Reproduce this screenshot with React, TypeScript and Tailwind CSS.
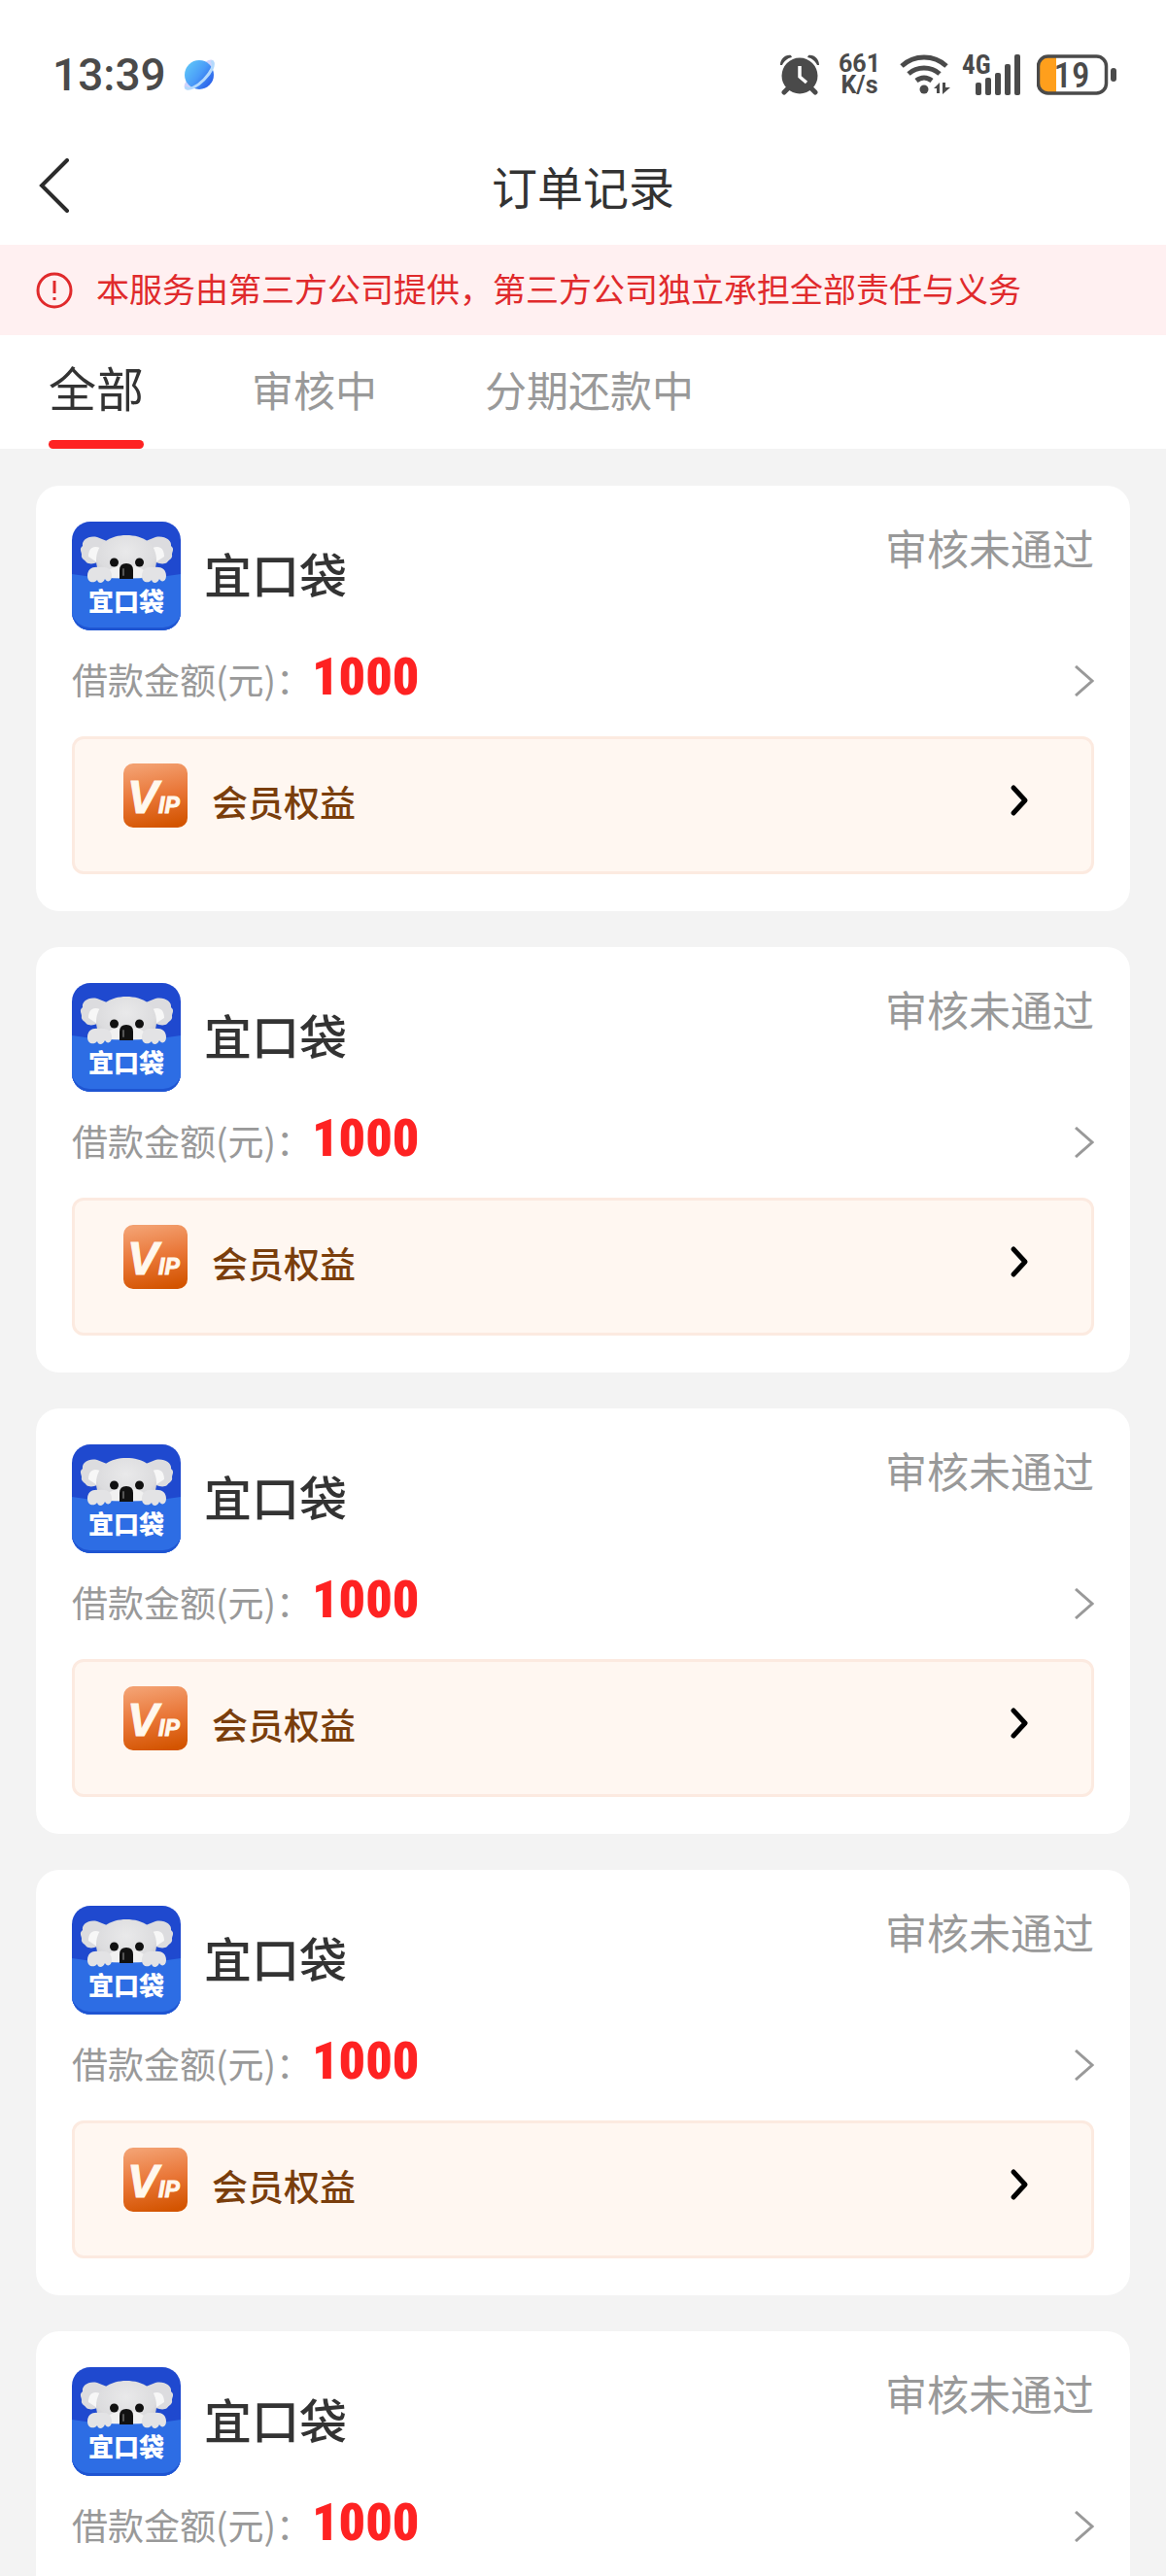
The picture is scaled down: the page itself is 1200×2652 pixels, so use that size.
import { useState } from 'react';

type Order = {
  id: number;
  name: string;
  amount: number;
  status: string;
};

const TABS = ['全部', '审核中', '分期还款中'];

const ORDERS: Order[] = [
  { id: 1, name: '宜口袋', amount: 1000, status: '审核未通过' },
  { id: 2, name: '宜口袋', amount: 1000, status: '审核未通过' },
  { id: 3, name: '宜口袋', amount: 1000, status: '审核未通过' },
  { id: 4, name: '宜口袋', amount: 1000, status: '审核未通过' },
  { id: 5, name: '宜口袋', amount: 1000, status: '审核未通过' },
];

function PlanetIcon() {
  return (
    <svg className="size-8" viewBox="0 0 32 32">
      <defs>
        <linearGradient id="planet" x1="0.1" y1="0.2" x2="0.9" y2="0.8">
          <stop offset="0" stopColor="#5cc0f8" />
          <stop offset="0.5" stopColor="#4a9cf8" />
          <stop offset="1" stopColor="#2a62ea" />
        </linearGradient>
      </defs>
      <g transform="rotate(-45 16 16)">
        <ellipse cx="16" cy="16" rx="19" ry="5" fill="#cfd3fb" stroke="#cfd3fb" strokeWidth="3" />
      </g>
      <circle cx="16" cy="16" r="15" fill="url(#planet)" />
      <g transform="rotate(-45 16 16)">
        <path d="M-3 16A19 7 0 0 0 35 16" fill="none" stroke="#b4dafd" strokeLinecap="round" strokeWidth="3" />
      </g>
    </svg>
  );
}

function AlarmIcon() {
  return (
    <svg className="h-[42px] w-10" viewBox="0 0 40 42">
      <g stroke="#4a4a4a" strokeLinecap="round" strokeWidth="5">
        <path d="M8 35L4 39M32 35L36 39" />
      </g>
      <path d="M0 11C0 5 5 0 11 1L12 3C7 4 4 7 2 11ZM40 11C40 5 35 0 29 1L28 3C33 4 36 7 38 11Z" fill="#4a4a4a" />
      <circle cx="20" cy="22" r="18.500" fill="#4a4a4a" />
      <path d="M20 12V23L27 29" fill="none" stroke="#fff" strokeWidth="3.500" />
    </svg>
  );
}

function WifiIcon() {
  return (
    <svg className="h-[42px] w-[52px]" viewBox="0 0 52 42">
      <g fill="none" stroke="#4a4a4a" strokeWidth="5">
        <path d="M2 12C15 0 35 0 48 12" />
        <path d="M9 20C18 12 32 12 41 20" />
        <path d="M17 27C22 23 28 23 33 27" />
      </g>
      <circle cx="25" cy="36" r="4.500" fill="#4a4a4a" />
      <path d="M35 35L41 29V40H38V35ZM44 29H47V34H52L44 41Z" fill="#4a4a4a" />
    </svg>
  );
}

function SignalIcon() {
  return (
    <svg className="h-[42px] w-[65px] overflow-visible" viewBox="0 0 65 42">
      <text x="0" y="20" fill="#4a4a4a" fontFamily="'Roboto Condensed', Roboto, sans-serif" fontSize="27" fontWeight="700">
        4G
      </text>
      <g fill="#4a4a4a">
        <rect x="14" y="29" width="6" height="13" rx="2" />
        <rect x="24" y="24" width="6" height="18" rx="2" />
        <rect x="34" y="19" width="6" height="23" rx="2" />
        <rect x="44" y="10" width="6" height="32" rx="2" />
        <rect x="54" y="0" width="6" height="42" rx="2" />
      </g>
    </svg>
  );
}

function BatteryIcon() {
  return (
    <svg className="h-[42px] w-[82px]" viewBox="0 0 82 42">
      <path d="M20 2H12Q2 2 2 12V30Q2 40 12 40H20Z" fill="#ff9f1c" />
      <rect x="1.500" y="2" width="70" height="38" rx="10" fill="none" stroke="#4a4a4a" strokeWidth="3.500" />
      <rect x="76" y="14" width="6" height="14" rx="3" fill="#4a4a4a" />
      <text
        x="36"
        y="34"
        fill="#4a4a4a"
        fontFamily="'Roboto Condensed', Roboto, sans-serif"
        fontSize="37"
        fontWeight="500"
        textAnchor="middle"
      >
        19
      </text>
    </svg>
  );
}

function StatusBar() {
  return (
    <div className="flex h-[154px] items-center justify-between pr-[51px] pl-[54px] font-[Roboto,sans-serif] text-[#4a4a4a]">
      <div className="flex items-center gap-[18px]">
        <span className="text-[46px] leading-none font-medium">13:39</span>
        <PlanetIcon />
      </div>
      <div className="flex items-center gap-5">
        <AlarmIcon />
        <span className="text-center text-[25px] leading-[22px] font-bold">
          661
          <br />
          K/s
        </span>
        <div className="flex gap-3">
          <WifiIcon />
          <SignalIcon />
          <BatteryIcon />
        </div>
      </div>
    </div>
  );
}

function KoalaLogo() {
  return (
    <svg className="size-28 shrink-0" viewBox="0 0 112 112">
      <defs>
        <clipPath id="logo-clip">
          <rect width="112" height="112" rx="19" />
        </clipPath>
        <radialGradient id="fur" cx="0.5" cy="0.35" r="0.7">
          <stop offset="0" stopColor="#e9e9ea" />
          <stop offset="0.7" stopColor="#dcdcde" />
          <stop offset="1" stopColor="#c4c4c8" />
        </radialGradient>
      </defs>
      <g clipPath="url(#logo-clip)">
        <rect width="112" height="112" fill="#1f49cf" />
        <path d="M26 16C17 14 10 19 11 25C7 28 10 31 10 34C9 38 13 39 15 42C19 45 27 43 32 38L36 20ZM86 16C95 14 103 19 102 25C106 28 103 31 103 34C104 38 100 39 98 42C94 45 86 43 80 38L76 20Z" fill="#dcdcdf" />
        <path d="M17 36C17 27 22 24 29 27L26 42ZM95 36C95 27 90 24 83 27L86 42Z" fill="#f7f7f7" />
        <path d="M25 40C25 22 40 14 56 14C73 14 87 22 87 40C87 54 76 62 56 62C36 62 25 54 25 40Z" fill="url(#fur)" />
        <ellipse cx="56" cy="53" rx="19" ry="8" fill="#f1f1f1" />
        <path d="M0 54Q56 63 112 54V112H0Z" fill="#2d6de4" />
        <path d="M0 96V112H112V96Q107 108 94 109H18Q5 108 0 96Z" fill="#1f55d2" />
        <path d="M16 56C16 49 21 46 28 47C36 46 41 49 41 56C41 62 36 63 34 59C32 64 27 64 26 60C23 64 16 63 16 56ZM72 56C72 49 77 46 84 47C92 46 97 49 97 56C97 62 92 63 90 59C88 64 83 64 82 60C79 64 72 63 72 56Z" fill="#e3e3e5" />
        <circle cx="43.500" cy="42" r="4.500" fill="#111" />
        <circle cx="69.500" cy="42" r="4.500" fill="#111" />
        <path d="M49 59V50Q49 43 56 43Q63 43 63 50V59Z" fill="#111" />
        <path d="M53 55V49" stroke="#555" strokeLinecap="round" strokeWidth="2" />
        <text
          x="56"
          y="92"
          fill="#fff"
          fontFamily="'Noto Sans CJK SC', sans-serif"
          fontSize="26"
          fontWeight="900"
          textAnchor="middle"
        >
          宜口袋
        </text>
      </g>
    </svg>
  );
}

function VipIcon() {
  return (
    <svg className="size-[66px]" viewBox="0 0 66 66">
      <defs>
        <linearGradient id="vip" x1="0.4" y1="0" x2="0.6" y2="1">
          <stop offset="0" stopColor="#f3a070" />
          <stop offset="0.5" stopColor="#e97637" />
          <stop offset="1" stopColor="#d35400" />
        </linearGradient>
      </defs>
      <rect width="66" height="66" rx="10" fill="url(#vip)" />
      <g
        fill="#fff8ee"
        stroke="#fff8ee"
        strokeWidth="1"
        fontFamily="'Liberation Sans', Arial, sans-serif"
        fontStyle="italic"
        fontWeight="700"
      >
        <text x="4" y="51" fontSize="48">
          V
        </text>
        <text x="36" y="51" fontSize="23">
          IP
        </text>
      </g>
    </svg>
  );
}

function OrderCard({ order }: { order: Order }) {
  return (
    <article className="rounded-[24px] bg-white px-[37px] pt-[37px] pb-[38px]">
      <div className="flex h-28 items-start">
        <KoalaLogo />
        <h2 className="ml-6 text-[49px] leading-[106px] font-medium text-[#333]">{order.name}</h2>
        <span className="ml-auto text-[43px] leading-[52px] text-[#999]">{order.status}</span>
      </div>

      <button type="button" className="mt-5 flex h-16 w-full items-center text-left">
        <span className="pb-1 text-[37px] leading-none text-[#999]">借款金额(元)：</span>
        <span className="pb-2 font-['Roboto_Condensed',Roboto,sans-serif] text-[54px] leading-none font-black text-[#fe2222]">
          {order.amount}
        </span>
        <svg className="ml-auto h-8 w-5" viewBox="0 0 20 32" fill="none" stroke="#999" strokeWidth="3">
          <path d="M1 1L18 16L1 31" />
        </svg>
      </button>

      <button
        type="button"
        className="mt-[25px] flex h-[142px] w-full items-start rounded-xl border-3 border-[#fceae0] bg-[#fff7f1] px-[50px] pt-[25px] text-left"
      >
        <span className="flex flex-1 items-end">
          <VipIcon />
          <span className="ml-[25px] text-[37px] leading-[54px] font-medium text-[#7a3e0c]">会员权益</span>
          <svg
            className="ml-auto h-14 w-12"
            viewBox="0 0 48 56"
            fill="none"
            stroke="#000"
            strokeLinecap="round"
            strokeLinejoin="round"
            strokeWidth="5"
          >
            <path d="M18 15L30 28L18 41" />
          </svg>
        </span>
      </button>
    </article>
  );
}

export default function App() {
  const [activeTab, setActiveTab] = useState(TABS[0]);

  return (
    <div className="flex h-screen flex-col bg-[#f3f3f3] font-['Noto_Sans_CJK_SC',sans-serif]">
      <header className="shrink-0 bg-white">
        <StatusBar />

        {/* Title bar */}
        <div className="grid h-[98px] grid-cols-3 items-start px-[37px]">
          <button type="button" aria-label="返回" className="flex h-[74px] w-16 items-center">
            <svg className="h-14 w-9" viewBox="0 0 36 56" fill="none" stroke="#2b2b2b" strokeLinecap="round" strokeWidth="4">
              <path d="M32 2L6 28L32 54" />
            </svg>
          </button>
          <h1 className="text-center text-[47px] leading-[74px] text-[#333]">订单记录</h1>
        </div>

        {/* Notice */}
        <div className="flex h-[93px] items-center gap-6 bg-[#fff0f1] px-[37px] text-[#e02a2c]">
          <svg className="size-[38px]" viewBox="0 0 38 38" fill="none" stroke="currentColor" strokeWidth="3">
            <circle cx="19" cy="19" r="17" />
            <path d="M19 9V22M19 26V29" />
          </svg>
          <p className="pb-1 text-[34px] leading-none">本服务由第三方公司提供，第三方公司独立承担全部责任与义务</p>
        </div>

        {/* Tabs */}
        <nav className="flex h-[117px] gap-[111px] px-[50px]">
          {TABS.map((tab) => (
            <button
              key={tab}
              type="button"
              onClick={() => setActiveTab(tab)}
              className={
                tab === activeTab
                  ? 'flex flex-col justify-between text-[49px] leading-[106px] text-[#333]'
                  : 'flex flex-col justify-between text-[43px] leading-[110px] text-[#999]'
              }
            >
              {tab}
              {tab === activeTab && <span className="h-[9px] w-full rounded-full bg-[#fe2222]" />}
            </button>
          ))}
        </nav>
      </header>

      <main className="flex-1 space-y-[37px] overflow-y-auto px-[37px] py-[38px] [scrollbar-width:none]">
        {ORDERS.map((order) => (
          <OrderCard key={order.id} order={order} />
        ))}
      </main>
    </div>
  );
}
